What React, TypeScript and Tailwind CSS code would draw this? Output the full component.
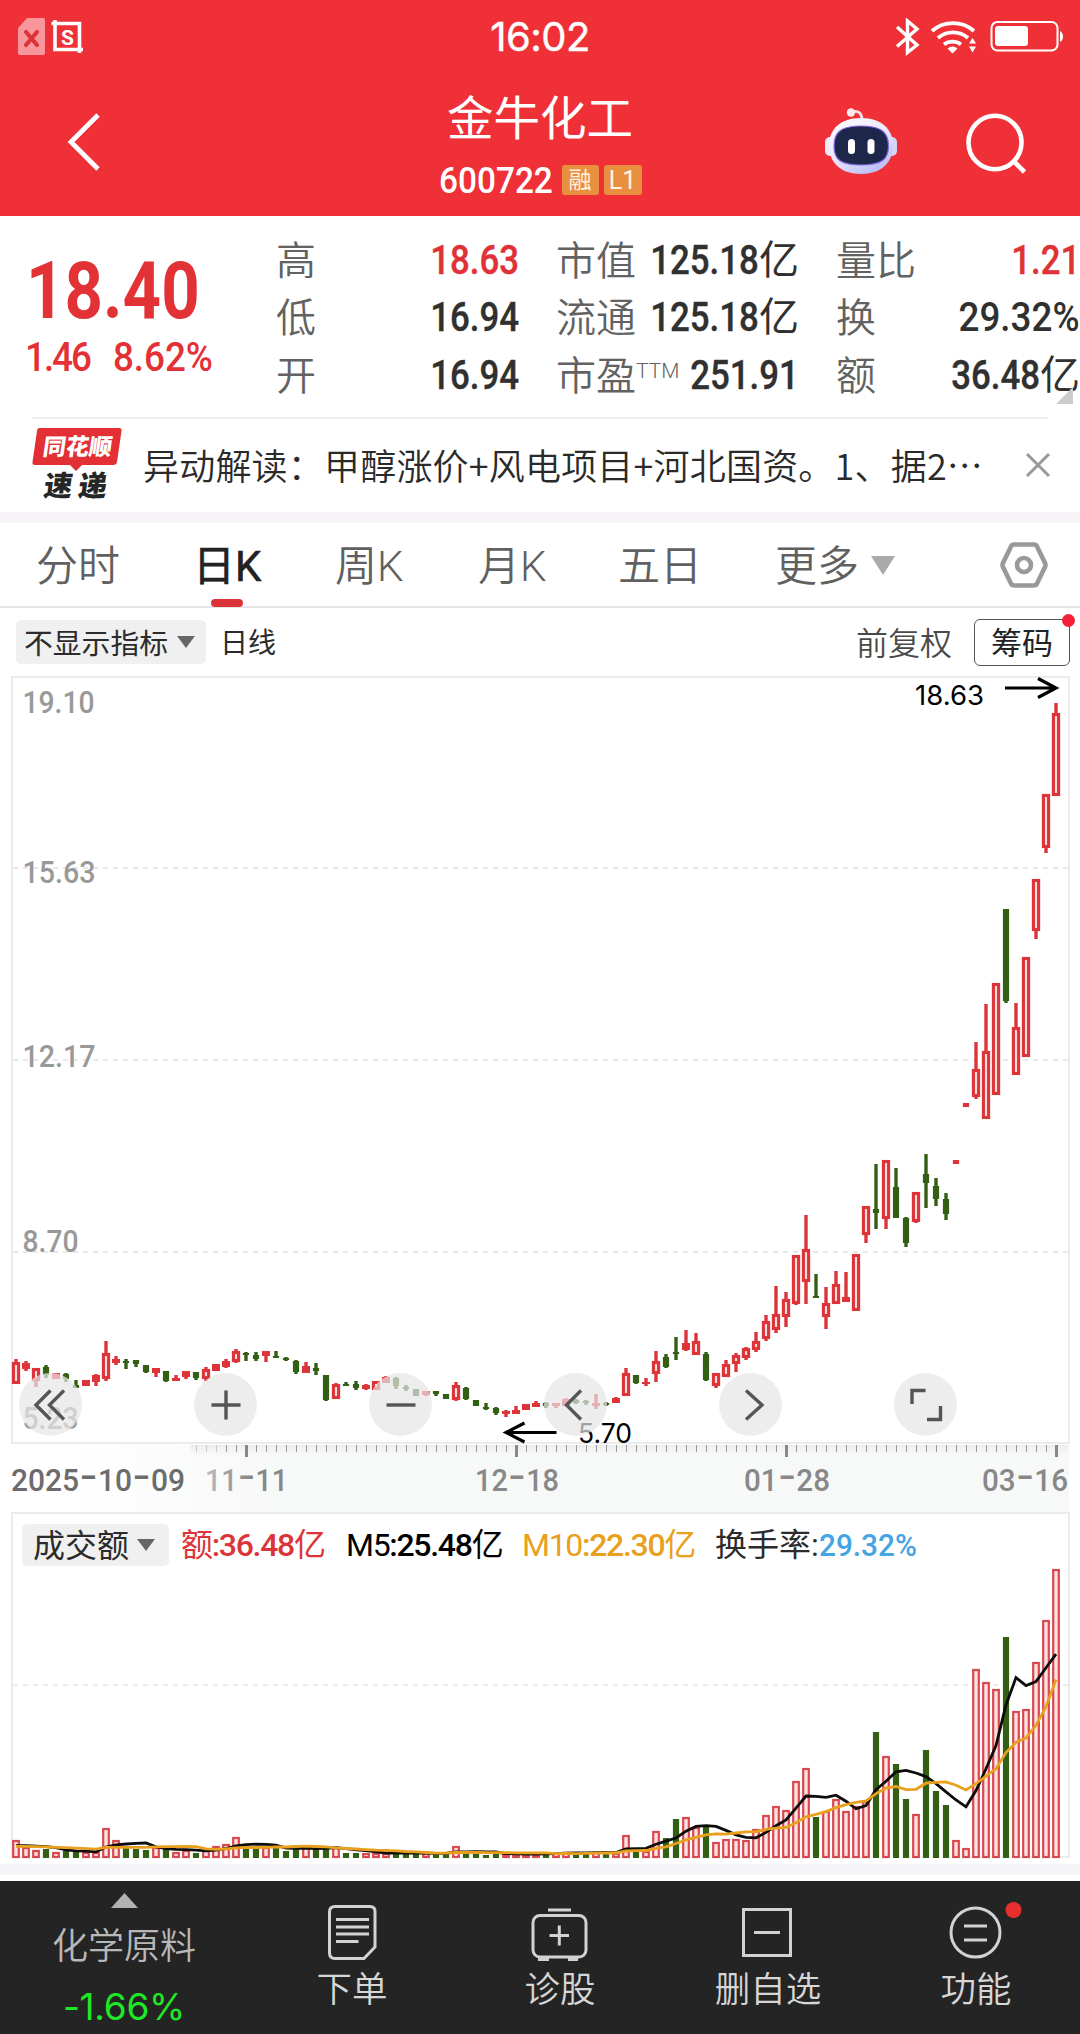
import type { ReactNode } from "react";

type Candle = [dir: "r" | "g", high: number, top: number, bottom: number, low: number];

// daily candles, y positions on the price plot
const candles: Candle[] = [
  ["r", 1359, 1362, 1384, 1384], ["r", 1361, 1363, 1369, 1371], ["r", 1368, 1368, 1381, 1387],
  ["g", 1365, 1367, 1375, 1378], ["r", 1373, 1373, 1379, 1379], ["g", 1373, 1374, 1379, 1382],
  ["g", 1380, 1385, 1388, 1388], ["r", 1380, 1380, 1386, 1386], ["r", 1374, 1375, 1382, 1386],
  ["r", 1341, 1353, 1379, 1381], ["r", 1356, 1359, 1363, 1365], ["g", 1359, 1361, 1363, 1369],
  ["g", 1360, 1360, 1364, 1367], ["g", 1365, 1365, 1372, 1373], ["r", 1368, 1368, 1373, 1377],
  ["g", 1371, 1371, 1381, 1382], ["r", 1375, 1378, 1381, 1381], ["r", 1371, 1371, 1377, 1379],
  ["g", 1372, 1372, 1378, 1380], ["r", 1367, 1369, 1379, 1381], ["r", 1364, 1364, 1371, 1371],
  ["r", 1359, 1361, 1367, 1368], ["r", 1349, 1351, 1362, 1363], ["g", 1352, 1353, 1355, 1361],
  ["g", 1352, 1355, 1359, 1361], ["r", 1351, 1351, 1356, 1362], ["g", 1351, 1356, 1358, 1358],
  ["g", 1357, 1358, 1360, 1361], ["g", 1360, 1361, 1372, 1374], ["r", 1362, 1366, 1373, 1373],
  ["g", 1363, 1368, 1371, 1375], ["g", 1375, 1375, 1400, 1401], ["r", 1383, 1384, 1399, 1399],
  ["g", 1382, 1384, 1386, 1386], ["g", 1381, 1384, 1388, 1390], ["r", 1384, 1385, 1389, 1390],
  ["r", 1381, 1381, 1390, 1390], ["r", 1376, 1377, 1383, 1383], ["g", 1377, 1378, 1386, 1389],
  ["g", 1385, 1387, 1389, 1391], ["g", 1389, 1389, 1396, 1396], ["r", 1391, 1391, 1395, 1396],
  ["g", 1391, 1391, 1394, 1396], ["g", 1394, 1394, 1399, 1399], ["r", 1382, 1385, 1400, 1401],
  ["g", 1387, 1388, 1399, 1400], ["g", 1400, 1400, 1406, 1406], ["g", 1403, 1407, 1409, 1410],
  ["g", 1407, 1408, 1413, 1415], ["r", 1410, 1411, 1414, 1417], ["r", 1406, 1410, 1414, 1414],
  ["r", 1404, 1404, 1410, 1410], ["r", 1401, 1403, 1407, 1407], ["g", 1402, 1403, 1406, 1408],
  ["r", 1403, 1403, 1406, 1408], ["r", 1398, 1399, 1406, 1406], ["g", 1399, 1400, 1403, 1404],
  ["g", 1400, 1401, 1403, 1405], ["r", 1394, 1403, 1406, 1409], ["g", 1402, 1403, 1405, 1406],
  ["r", 1397, 1398, 1403, 1403], ["r", 1368, 1373, 1396, 1396], ["g", 1375, 1375, 1383, 1384],
  ["r", 1378, 1382, 1384, 1386], ["r", 1351, 1361, 1374, 1382], ["g", 1354, 1357, 1367, 1368],
  ["g", 1337, 1352, 1354, 1360], ["r", 1330, 1343, 1350, 1351], ["r", 1333, 1341, 1355, 1355],
  ["g", 1352, 1354, 1380, 1381], ["r", 1373, 1373, 1386, 1388], ["r", 1360, 1364, 1377, 1377],
  ["r", 1353, 1355, 1364, 1372], ["r", 1347, 1348, 1358, 1360], ["r", 1332, 1341, 1350, 1352],
  ["r", 1315, 1321, 1339, 1341], ["r", 1286, 1314, 1330, 1333], ["r", 1292, 1299, 1317, 1327],
  ["r", 1255, 1255, 1304, 1305], ["r", 1215, 1249, 1282, 1304], ["g", 1274, 1296, 1298, 1298],
  ["r", 1287, 1303, 1317, 1329], ["r", 1271, 1284, 1304, 1304], ["r", 1272, 1297, 1302, 1302],
  ["r", 1254, 1254, 1311, 1311], ["r", 1206, 1206, 1235, 1243], ["g", 1164, 1209, 1213, 1229],
  ["r", 1160, 1160, 1219, 1229], ["g", 1168, 1187, 1218, 1218], ["g", 1217, 1218, 1243, 1247],
  ["r", 1192, 1192, 1222, 1223], ["g", 1154, 1174, 1183, 1208], ["g", 1178, 1186, 1199, 1206],
  ["g", 1193, 1199, 1214, 1220], ["r", 1160, 1160, 1164, 1164], ["r", 1103, 1103, 1107, 1107],
  ["r", 1042, 1069, 1097, 1099], ["r", 1004, 1051, 1119, 1119], ["r", 983, 983, 1095, 1095],
  ["g", 909, 909, 1001, 1003], ["r", 1003, 1027, 1075, 1075], ["r", 957, 957, 1057, 1057],
  ["r", 879, 879, 931, 939], ["r", 794, 794, 848, 853], ["r", 703, 713, 796, 796],
];

const volumes = [
  18, 11, 8, 9, 6, 7, 6, 6, 6, 30, 18, 10, 9, 8, 11, 9, 6, 8, 5, 8, 12, 14, 21, 12, 10, 11, 10, 7, 10, 11, 9, 11, 11,
  5, 5, 5, 5, 5, 5, 4, 5, 5, 4, 5, 12, 5, 6, 3, 4, 4, 4, 4, 4, 5, 5, 6, 5, 5, 6, 6, 5, 23, 7, 7, 27, 20, 39, 41, 31,
  31, 16, 19, 19, 18, 29, 43, 52, 48, 77, 90, 41, 47, 59, 47, 52, 57, 126, 102, 94, 59, 44, 108, 67, 53, 18, 10, 189,
  176, 169, 221, 147, 149, 196, 238, 289,
];

const RED = "#dc3439";
const GREEN = "#335f15";
const BASE = 1858;
const STEP = 10;
const xAt = (i: number) => 16 + i * STEP;

function average(days: number) {
  return volumes
    .map((_, i) => {
      let sum = 0;
      for (let k = 0; k < days; k++) sum += volumes[i - k] ?? 11;
      return `${xAt(i)},${(BASE - sum / days).toFixed(1)}`;
    })
    .join(" ");
}

function CandleMark({ candle, x }: { candle: Candle; x: number }) {
  const [dir, high, top, bottom, low] = candle;
  const color = dir === "r" ? RED : GREEN;
  const h = bottom - top;
  const hollow = dir === "r" && h > 8;
  // limit-up days trade at a single price
  const flat = high === top && low === bottom && h <= 4;
  return (
    <g>
      {low > high && !flat && <path d={`M${x} ${high}V${low}`} stroke={color} strokeWidth="3.4" />}
      {hollow ? (
        <rect x={x - 2.6} y={top + 1.5} width="5.2" height={h - 3} fill="#fbdcdb" stroke={color} strokeWidth="3.1" />
      ) : (
        <rect x={x - (dir === "r" && !flat ? 4 : 3.1)} y={top} width={dir === "r" && !flat ? 8 : 6.2} height={h} fill={color} />
      )}
    </g>
  );
}

const axisLabels = [
  { text: "19.10", y: 712.5, w: 72 },
  { text: "15.63", y: 882.5, w: 73 },
  { text: "12.17", y: 1067, w: 73 },
  { text: "8.70", y: 1252, w: 56 },
  { text: "5.23", y: 1429, w: 56 },
];

function PriceChart() {
  return (
    <svg width="1080" height="769" viewBox="0 676 1080 769" className="block overflow-visible">
      <g stroke="#e9e9e9" strokeWidth="2" strokeDasharray="5 5">
        <path d="M13 868H1068M13 1060H1068M13 1252H1068" />
      </g>
      <path d="M12 677H1069V1443H12Z" fill="none" stroke="#ebebeb" strokeWidth="2" />
      <g fill="#999" fontSize="32" fontWeight="500">
        {axisLabels.map((l) => (
          <text key={l.text} x="22.500" y={l.y} textLength={l.w} lengthAdjust="spacingAndGlyphs">
            {l.text}
          </text>
        ))}
      </g>
      {candles.map((c, i) => (
        <CandleMark key={i} candle={c} x={xAt(i)} />
      ))}
      <g fill="none" stroke="#000" strokeWidth="3.2">
        <path d="M1005 688H1056M1038 678.500L1056 688L1038 697.500" />
        <path d="M556.500 1432.500H506M524.500 1423L506 1432.500L524.500 1442" />
      </g>
      <g className="font-['Inter']" fontSize="26.500" fill="#000">
        <text x="915" y="704.500" textLength="69" lengthAdjust="spacingAndGlyphs">18.63</text>
        <text x="578" y="1442.500" textLength="54" lengthAdjust="spacingAndGlyphs">5.70</text>
      </g>
    </svg>
  );
}

function RoundButton({ children }: { children: ReactNode }) {
  return (
    <button className="flex size-[63px] items-center justify-center rounded-full bg-[#e7e5e7]/70">
      <svg width="40" height="40" viewBox="0 0 40 40" fill="none" stroke="#555" strokeWidth="3.4">
        {children}
      </svg>
    </button>
  );
}

function ChartControls() {
  return (
    <div className="absolute bottom-[9px] left-[19px] flex gap-[112px]">
      <RoundButton><path d="M19.500 5.500L5 20L19.500 34.500M33 5.500L18.500 20L33 34.500" /></RoundButton>
      <RoundButton><path d="M5.500 20H34.500M20 5.500V34.500" /></RoundButton>
      <RoundButton><path d="M5.500 20H34.500" /></RoundButton>
      <RoundButton><path d="M25 5.500L10.500 20L25 34.500" /></RoundButton>
      <RoundButton><path d="M15 5.500L31 20L15 34.500" /></RoundButton>
      <RoundButton><path d="M6 19V5.500H19.500M34.500 21V34.500H21" /></RoundButton>
    </div>
  );
}

const dates = [
  { text: "11-11", x: 205, w: 83 },
  { text: "12-18", x: 475, w: 84 },
  { text: "01-28", x: 744, w: 86 },
  { text: "03-16", x: 982, w: 86 },
];

function DateAxis() {
  return (
    <svg width="1080" height="67" viewBox="0 1445 1080 67" className="block" fontSize="32" fontWeight="500">
      <defs>
        <linearGradient id="axisX">
          <stop offset="0.06" stopColor="#f7f8f8" stopOpacity="0" />
          <stop offset="0.26" stopColor="#f7f8f8" />
        </linearGradient>
        <linearGradient id="axisY" x2="0" y2="1">
          <stop offset="0" stopColor="#e9e9e9" />
          <stop offset="1" stopColor="#f7f8f8" stopOpacity="0" />
        </linearGradient>
        <linearGradient id="fade" gradientUnits="userSpaceOnUse" x1="200" x2="250">
          <stop offset="0" stopColor="#c4c4c4" />
          <stop offset="1" stopColor="#888" />
        </linearGradient>
      </defs>
      <rect x="12" y="1445" width="1057" height="67" fill="url(#axisX)" />
      <rect x="190" y="1444" width="879" height="14" fill="url(#axisY)" />
      {volumes.map((_, i) =>
        i < 18 ? null : (i - 23) % 27 === 0 ? (
          <path key={i} d={`M${xAt(i) + 0.5} 1444V1457`} stroke="#888" strokeWidth="3" />
        ) : (
          <path key={i} d={`M${xAt(i) + 0.5} 1444V1452`} stroke={i < 21 ? "#ccc" : "#999"} />
        )
      )}
      <DateText text="2025-10-09" x={11} w={174} fill="#6c6c6c" />
      {dates.map((d, i) => (
        <DateText key={d.text} {...d} fill={i === 0 ? "url(#fade)" : "#888"} />
      ))}
    </svg>
  );
}

function DateText({ text, x, w, fill }: { text: string; x: number; w: number; fill: string }) {
  return (
    <text x={x} y="1491" textLength={w} lengthAdjust="spacingAndGlyphs" fill={fill}>
      {text.split("-").map((part, i) => (
        <tspan key={i}>
          {i > 0 && <tspan className="font-['Inter']" fontSize="44" fontWeight="400">-</tspan>}
          {part}
        </tspan>
      ))}
    </text>
  );
}

function VolumeChart() {
  return (
    <svg width="1080" height="292" viewBox="0 1567 1080 292" className="block">
      <path d="M13 1685H1068" stroke="#ebebeb" strokeWidth="2" strokeDasharray="5 5" />
      <path d="M12 1567V1857M1069 1567V1857H1058" fill="none" stroke="#ebebeb" strokeWidth="2" />
      {volumes.map((v, i) =>
        candles[i][0] === "r" ? (
          <rect
            key={i}
            x={xAt(i) - 2.8}
            y={BASE - v + 1}
            width="5.6"
            height={Math.max(v - 2, 2)}
            fill="#fde2e1"
            stroke="#d8484e"
            strokeWidth="2.2"
          />
        ) : (
          <rect key={i} x={xAt(i) - 3.1} y={BASE - v} width="6.2" height={v} fill={GREEN} />
        )
      )}
      <polyline points={average(5)} fill="none" stroke="#0c0c0c" strokeWidth="2.8" />
      <polyline points={average(10)} fill="none" stroke="#e8a01e" strokeWidth="2.8" />
    </svg>
  );
}

function Robot() {
  return (
    <svg width="74" height="68" viewBox="824 107 74 68">
      <defs>
        <linearGradient id="shell" x2="0.6" y2="1">
          <stop offset="0" stopColor="#fff" />
          <stop offset="0.6" stopColor="#e9e6fb" />
          <stop offset="1" stopColor="#bcc0f5" />
        </linearGradient>
      </defs>
      <path d="M852 112C858 110 862 113 862 120" fill="none" stroke="#f6dfe8" strokeWidth="2.8" />
      <circle cx="851" cy="112.500" r="4.200" fill="#fbe9ee" />
      <rect x="825" y="137" width="12" height="19" rx="5" fill="#ece9fa" />
      <rect x="885" y="137" width="12" height="19" rx="5" fill="#d5d5f8" />
      <path d="M861 118C881 118 893 129 893 145C893 163 881 174 861 174C841 174 829 163 829 145C829 129 841 118 861 118Z" fill="url(#shell)" />
      <path d="M861 126C881 126 888.500 132 888.500 146C888.500 160 881 165 861 165C841 165 834 160 834 146C834 132 841 126 861 126Z" fill="#1d2749" stroke="#8a6de8" strokeWidth="1.200" />
      <rect x="848" y="139" width="7" height="15" rx="3.500" fill="#fff" />
      <rect x="867.500" y="139" width="7" height="15" rx="3.500" fill="#fff" />
    </svg>
  );
}

function StatusBar() {
  return (
    <div className="flex h-[74px] items-center justify-between pl-[18px] pr-[17px]">
      <svg width="66" height="38" viewBox="0 0 66 38">
        <path d="M9 0H25Q27 0 27 2V35Q27 37 25 37H2Q0 37 0 35V10Z" fill="#f8979b" />
        <path d="M8 14L19 27M19 14L8 27" stroke="#dd3238" strokeWidth="4.200" strokeLinecap="round" />
        <path d="M33.500 5.500H61.500V35M37 2V31.500H65" fill="none" stroke="#fff" strokeWidth="3.600" />
        <text x="49.500" y="26.500" textAnchor="middle" fontSize="21" fontWeight="700" fill="#fff">S</text>
      </svg>
      <span className="ml-[101px] font-['Inter'] text-[40px] leading-none tracking-[-0.5px] text-white [-webkit-text-stroke:0.4px]">16:02</span>
      <svg width="168" height="38" viewBox="895 18 168 38" fill="none" stroke="#fff">
        <path d="M897 27L917 45L907.500 52.500V21L917 29L897 46.500" strokeWidth="3.400" />
        <path d="M932 31A32 32 0 0 1 974 31M938 38A23 23 0 0 1 968 38M944 44.500A14 14 0 0 1 961 44.500" strokeWidth="3.800" />
        <path d="M947.500 48.500Q952.500 44.500 957.500 48.500L952.500 53.500Z" fill="#fff" stroke="none" />
        <path d="M969 43.500L972.500 38L976 43.500ZM969 46.500L972.500 52.500L976 46.500Z" fill="#fff" stroke="none" />
        <rect x="991.500" y="22" width="66" height="28.500" rx="6" strokeWidth="2" />
        <rect x="995" y="26" width="33" height="20" rx="3" fill="#fff" stroke="none" />
        <path d="M1060 31V42Q1063 40 1063 36.500T1060 31Z" fill="#fff" stroke="none" />
      </svg>
    </div>
  );
}

function Header() {
  return (
    <header className="h-[216px] bg-[#ef3037]">
      <StatusBar />
      <div className="relative flex h-[142px] items-start justify-between pl-[66px] pr-[52px]">
        <svg width="36" height="60" viewBox="66 112 36 60" className="mt-[38px]">
          <path d="M98 115L71 142L98 169" fill="none" stroke="#fff" strokeWidth="4.800" />
        </svg>
        <div className="absolute inset-x-0 top-[18px] flex flex-col items-center">
          <h1 className="text-[46.500px] leading-[54px] text-white">金牛化工</h1>
          <div className="mt-[17px] flex items-center">
            <span className="-mr-[9px] w-[124px] origin-left scale-x-[0.89] text-[37.500px] leading-[34px] font-medium text-white">600722</span>
            <span className="ml-[8px] flex h-[30px] w-[37px] items-center justify-center rounded-[3px] bg-[#e8903f] text-[23px] leading-none text-[#fff3e4]">融</span>
            <span className="ml-[5px] flex h-[30px] w-[38px] items-center justify-center rounded-[3px] bg-[#e8903f] text-[25px] leading-none text-[#fff3e4]">L1</span>
          </div>
        </div>
        <div className="flex">
          <div className="mt-[33px]"><Robot /></div>
          <svg width="66" height="66" viewBox="962 110 66 66" fill="none" stroke="#fff" strokeWidth="4.600" className="ml-[64px] mt-[36px]">
            <ellipse cx="995" cy="142.500" rx="26.500" ry="26.800" />
            <path d="M1014 161.500L1024.500 172" />
          </svg>
        </div>
      </div>
    </header>
  );
}

function Stat({ label, sup, value, unit, red }: { label: string; sup?: string; value: string; unit?: string; red?: boolean }) {
  const percent = value.endsWith("%");
  return (
    <div className="flex h-[57.500px] items-center justify-between leading-none">
      <span className="relative top-[2px] flex shrink-0 text-[40px] font-[350] text-[#626262]">
        {label}
        {sup && <sup className="top-0 mt-[4px] text-[21px] leading-none">{sup}</sup>}
      </span>
      <span className={red ? "relative top-px -ml-12 flex items-center text-[#e03236]" : "relative top-px -ml-12 flex items-center text-[#303030]"}>
        <span className={percent ? "origin-right scale-x-[0.92] text-[40px] font-medium" : "origin-right scale-x-[0.87] text-[40px] font-medium [-webkit-text-stroke:0.4px]"}>
          {value}
        </span>
        {unit && <span className="text-[40px]">{unit}</span>}
      </span>
    </div>
  );
}

function Quote() {
  return (
    <section className="flex h-[201px]">
      <div className="w-[276px] pl-[25px] text-[#e23236]">
        <div className="mt-[47px] ml-px w-[210px] origin-left scale-x-[0.84] text-[80px] leading-[57px] font-bold">18.40</div>
        <div className="mt-[23px] flex w-[230px] origin-left scale-x-[0.92] gap-[25px] text-[40px] leading-[30px] font-medium">
          <span className="tracking-[-2.200px]">1.46</span>
          <span>8.62%</span>
        </div>
      </div>
      <div className="w-[243px] pt-[15px]">
        <Stat label="高" value="18.63" red />
        <Stat label="低" value="16.94" />
        <Stat label="开" value="16.94" />
      </div>
      <div className="ml-[37px] w-[243px] pt-[15px]">
        <Stat label="市值" value="125.18" unit="亿" />
        <Stat label="流通" value="125.18" unit="亿" />
        <Stat label="市盈" sup="TTM" value="251.91" />
      </div>
      <div className="relative ml-[37px] w-[244px] pt-[15px]">
        <Stat label="量比" value="1.21" red />
        <Stat label="换" value="29.32%" />
        <Stat label="额" value="36.48" unit="亿" />
        <svg width="17" height="17" className="absolute right-[7px] bottom-[13px]"><path d="M17 0V17H0Z" fill="#ccc" /></svg>
      </div>
    </section>
  );
}

function News() {
  return (
    <section className="flex h-[95px] items-start">
      <div className="ml-[32px] flex h-full w-[1016px] border-t-2 border-[#ecf0f1]">
        <div className="relative w-[90px] pt-[9px]">
          <svg width="90" height="44" viewBox="0 0 90 44" className="absolute">
            <path d="M7 0H87Q90 0 89.500 3L85 34Q84.500 37 81 37H50L44 43L38 37H3Q0 37 0.500 34L5 3Q5.500 0 7 0Z" fill="#e23034" />
          </svg>
          <div className="relative top-px -skew-x-8 pl-[11px] text-[23px] leading-[37px] font-black whitespace-nowrap text-white">同花顺</div>
          <div className="relative mt-[6px] -skew-x-8 pl-[12px] text-[28.500px] leading-[32px] font-black whitespace-nowrap text-[#262626]">
            速<span className="ml-[6px]">递</span>
          </div>
        </div>
        <p className="mt-[21px] ml-[21px] font-['Noto_Sans_CJK_SC'] text-[36px] leading-[48px] font-[350] tracking-[0.200px] whitespace-nowrap text-[#2a2a2a]">
          异动解读：甲醇涨价+风电项目+河北国资。1、据2…
        </p>
      </div>
      <svg width="26" height="26" viewBox="0 0 26 26" className="-ml-[23px] mt-[35px]" stroke="#999" strokeWidth="3">
        <path d="M2 2L24 24M24 2L2 24" />
      </svg>
    </section>
  );
}

function Tabs() {
  return (
    <nav className="relative flex h-[85px] items-center border-b-2 border-[#e5e5e5] pt-[5px] pl-[36px] text-[42px] leading-none font-[350] text-[#606060]">
      <span className="w-[157px]">分时</span>
      <span className="w-[142px] font-normal text-[#222] [-webkit-text-stroke:0.6px]">日K</span>
      <span className="w-[143px]">周K</span>
      <span className="w-[140px]">月K</span>
      <span className="w-[157px]">五日</span>
      <span>更多</span>
      <svg width="24" height="19" className="-mt-[4px] ml-[12px]"><path d="M0 0H24L12 19Z" fill="#aaa" /></svg>
      <svg width="50" height="50" viewBox="0 0 50 50" className="-mt-[5px] ml-[104px]" fill="none" stroke="#999" strokeWidth="4.600">
        <path d="M15 4.500H35Q37 4.500 38 6.500L46 23Q47 25 46 27L38 43.500Q37 45.500 35 45.500H15Q13 45.500 12 43.500L4 27Q3 25 4 23L12 6.500Q13 4.500 15 4.500Z" />
        <circle cx="25" cy="25" r="7" />
      </svg>
      <i className="absolute -bottom-[1px] left-[211px] h-[8px] w-[32px] rounded-[4px] bg-[#dc333b]" />
    </nav>
  );
}

function ChartToolbar() {
  return (
    <div className="flex h-[68px] items-center pl-[16px] text-[28.800px] leading-none text-[#2b2b2b]">
      <button className="flex h-[44px] w-[190px] items-center rounded-[5px] bg-[#f0f0f0] pt-[4px] pl-[8px]">
        不显示指标
        <svg width="18" height="12" className="-mt-[4px] ml-[9px]"><path d="M0 0H18L9 12Z" fill="#666" /></svg>
      </button>
      <span className="mt-[4px] ml-[14px] text-[28px]">日线</span>
      <span className="mt-[3px] ml-auto text-[32px] font-[350] text-[#4a4a4a]">前复权</span>
      <button className="relative mr-[10px] ml-[22px] h-[47px] w-[96px] rounded-[6px] border border-[#555] pt-[2px] text-[31px] text-[#222]">
        筹码
        <i className="absolute -top-[6px] -right-[6px] size-[13px] rounded-full bg-[#f5213a]" />
      </button>
    </div>
  );
}

function VolumeLegend() {
  return (
    <div className="mr-[10px] ml-[11px] flex h-[55px] items-center border-2 border-b-0 border-[#ebebeb] pt-[8px] pl-[9px] text-[32px] leading-none font-medium whitespace-nowrap">
      <button className="flex h-[42px] w-[147px] items-center rounded-[5px] bg-[#f0f0f0] pl-[11px] font-normal text-[#2b2b2b]">
        <span className="mt-[3px]">成交额</span>
        <svg width="18" height="12" className="ml-[8px]"><path d="M0 0H18L9 12Z" fill="#666" /></svg>
      </button>
      <span className="ml-[12px] w-[165px] text-[#dc3439]"><Legend name="额" value="36.48" /></span>
      <span className="w-[176px] text-black"><Legend name="M5" value="25.48" /></span>
      <span className="w-[193px] text-[#e8a01e]"><Legend name="M10" value="22.30" /></span>
      <span className="font-normal text-[#2b2b2b]">换手率:</span>
      <span className="origin-left scale-x-[0.93] text-[#43a5e4]">29.32%</span>
    </div>
  );
}

function Legend({ name, value }: { name: string; value: string }) {
  return (
    <span className="inline-flex tracking-[-1.300px]">
      <span className="font-normal">{name}</span>:{value}
      <span className="font-normal">亿</span>
    </span>
  );
}

function NavItem({ label, children }: { label: string; children: ReactNode }) {
  return (
    <div className="relative flex w-[208px] flex-col items-center pt-[21px]">
      <svg width="60" height="60" viewBox="0 0 60 60" fill="none" stroke="#d2d2d2" strokeWidth="3" className="overflow-visible">
        {children}
      </svg>
      <span className="mt-[10px] text-[35.500px] leading-[36px] font-[350] text-[#d6d6d6]">{label}</span>
    </div>
  );
}

function BottomNav() {
  return (
    <footer className="flex h-[153px] bg-[#242424]">
      <div className="flex w-[248px] flex-col items-center pt-[12px]">
        <svg width="27" height="15"><path d="M0 15L13.500 0L27 15Z" fill="#b2b2b2" /></svg>
        <span className="mt-[21px] text-[36px] leading-[36px] font-[350] text-[#b8b8b8]">化学原料</span>
        <span className="mt-[24px] font-['Inter'] text-[37px] leading-[36px] tracking-[-0.300px] text-[#1fe826]">-1.66%</span>
      </div>
      <NavItem label="下单">
        <path d="M13 4.500H48Q53 4.500 53 9.500V45L42 56.500H13Q7.500 56.500 7.500 51V10Q7.500 4.500 13 4.500Z" />
        <path d="M14 17.500H47M14 25H47M14 32H47M14 39.500H36.500" />
      </NavItem>
      <NavItem label="诊股">
        <path d="M18 8H41" />
        <rect x="3" y="13.500" width="53" height="41.500" rx="7" />
        <path d="M8 57.500H19M38 57.500H48M19.500 33.500H39M29.300 23.500V43.500" />
      </NavItem>
      <NavItem label="删自选">
        <rect x="5.500" y="7.500" width="47" height="46" />
        <path d="M16 30.500H42" />
      </NavItem>
      <NavItem label="功能">
        <circle cx="29.500" cy="30.500" r="24.500" />
        <path d="M18 24H41M18 38H41" />
        <circle cx="67.500" cy="8" r="8" fill="#e6302f" stroke="none" />
      </NavItem>
    </footer>
  );
}

export default function App() {
  return (
    <div className="h-[2034px] w-[1080px] overflow-hidden bg-white font-['Roboto','Noto_Sans_CJK_SC',sans-serif]">
      <Header />
      <Quote />
      <News />
      <div className="h-[11px] bg-[#f6f4f6]" />
      <Tabs />
      <ChartToolbar />
      <div className="relative">
        <PriceChart />
        <ChartControls />
      </div>
      <DateAxis />
      <VolumeLegend />
      <VolumeChart />
      <div className="mt-[5px] h-[11px] bg-[#f5f4f6]" />
      <div className="h-[6px]" />
      <BottomNav />
    </div>
  );
}
